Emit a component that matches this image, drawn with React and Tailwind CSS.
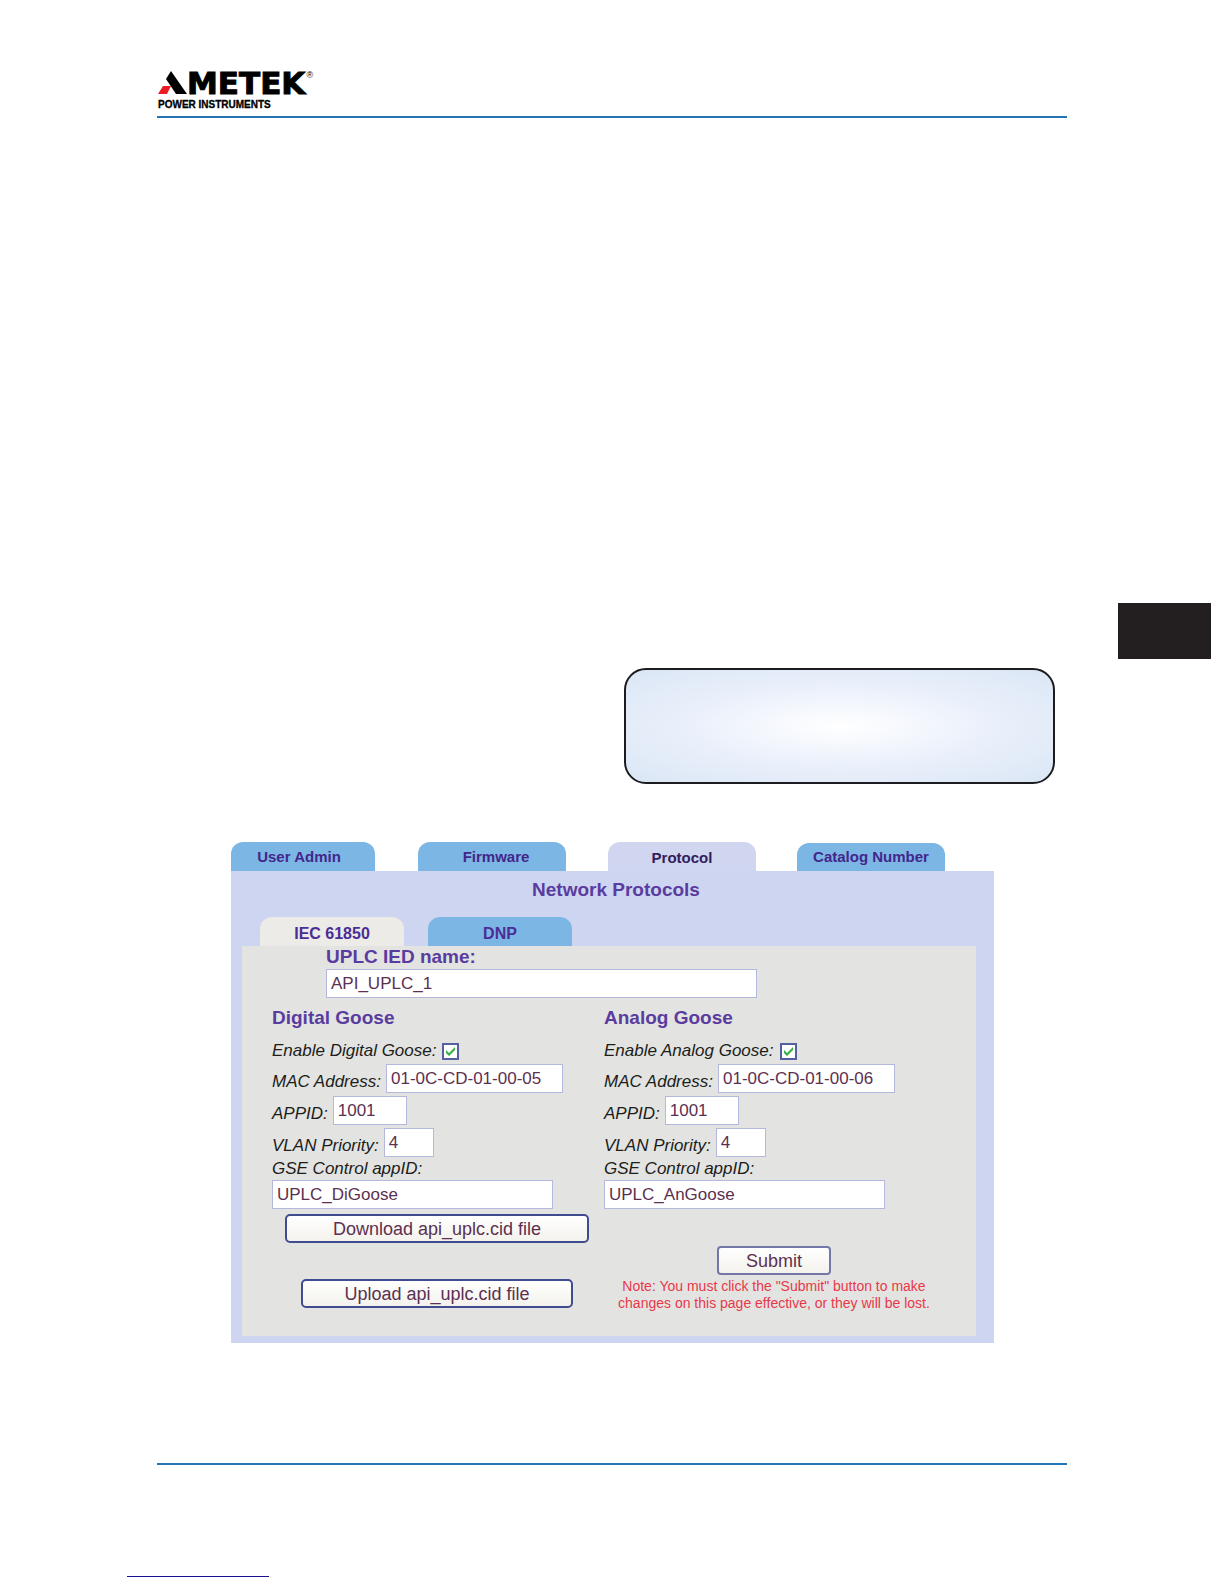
import { useState } from "react"

const topTabs = [
  { name: "User Admin", look: "mr-[43px] w-[144px] h-[29px] pr-[8px]" },
  { name: "Firmware", look: "mr-[42px] w-[148px] h-[29px] pl-[8px]" },
  { name: "Protocol", look: "mr-[41px] w-[148px] h-[29px] pt-[2px]" },
  { name: "Catalog Number", look: "w-[148px] h-[28px]" },
]

const headingClass = "text-[19px] leading-[22px] font-bold text-[#5a3ca0]"
const fieldClass = "h-[29px] border border-[#b4b8dc] bg-white px-[4px] text-[17px] text-[#5c3050] outline-none"
const buttonClass = "h-[29px] bg-linear-to-b from-white to-[#f3f2ec] text-[18px] leading-[22px] text-[#5c3050]"

function Logo() {
  return (
    <div className="w-fit pl-[1px]">
      <div className="flex h-[27px] items-start">
        <svg className="mt-[1px] h-[23px] w-[29px]" viewBox="0 0 29 23" aria-hidden="true">
          <path d="M13 0 L29 23 H18 L8 8 Z" fill="#000" />
          <path d="M5 15 H13 L9 23 H0 Z" fill="#ed1c24" />
        </svg>
        <span className="font-['DejaVu_Sans'] text-[31px] leading-[26px] font-bold text-black [-webkit-text-stroke:1px_black]">METEK</span>
        <span className="ml-[1px] text-[9px] leading-[10px]">®</span>
      </div>
      <div className="mt-[1px] mb-[1px] text-[10px] leading-[14px] font-bold text-black [-webkit-text-stroke:0.3px_black]">POWER INSTRUMENTS</div>
    </div>
  )
}

function TopTab({ name, look, active, onClick }) {
  return (
    <button
      role="tab"
      aria-selected={active}
      onClick={onClick}
      className={`shrink-0 rounded-t-[12px] text-[15px] leading-[20px] font-bold ${look} ${active ? "bg-[#d1d6f0] text-[#30205c]" : "bg-[#7cb6e4] text-[#43268c]"}`}
    >
      {name}
    </button>
  )
}

function SubTab({ name, active, onClick }) {
  return (
    <button
      role="tab"
      aria-selected={active}
      onClick={onClick}
      className={`h-[29px] w-[144px] rounded-t-[12px] pt-[4px] text-[16px] leading-[20px] font-bold text-[#4b2d96] ${active ? "bg-[#ecebe8]" : "bg-[#7cb6e4]"}`}
    >
      {name}
    </button>
  )
}

function Row({ id, label, value, width }) {
  return (
    <div className="mb-[3px] flex items-end gap-[5px]">
      <label htmlFor={id} className="leading-[22px]">{label}</label>
      <input id={id} type="text" defaultValue={value} className={`not-italic ${fieldClass} ${width}`} />
    </div>
  )
}

function GooseForm({ kind, mac, appId, gse }) {
  const id = kind.toLowerCase()
  return (
    <section className="text-[17px] text-[#201c1a] italic">
      <h3 className={`not-italic ${headingClass}`}>{kind} Goose</h3>
      <div className="mt-[11px] mb-[2px] flex h-[22px] items-center gap-[6px]">
        <label htmlFor={`${id}-enable`}>Enable {kind} Goose:</label>
        <span className="grid">
          <input
            id={`${id}-enable`}
            type="checkbox"
            defaultChecked
            className="peer col-start-1 row-start-1 size-[17px] appearance-none border-2 border-[#5560a0] bg-white"
          />
          <svg className="pointer-events-none invisible col-start-1 row-start-1 size-[17px] peer-checked:visible" viewBox="0 0 17 17">
            <path d="M4 7 L7 10 L13 4 V7 L7 13 L4 10 Z" fill="#35b044" />
          </svg>
        </span>
      </div>
      <Row id={`${id}-mac`} label="MAC Address:" value={mac} width="w-[177px]" />
      <Row id={`${id}-appid`} label="APPID:" value={appId} width="w-[74px]" />
      <Row id={`${id}-vlan`} label="VLAN Priority:" value="4" width="w-[50px]" />
      <label htmlFor={`${id}-gse`} className="block leading-[18px]">GSE Control appID:</label>
      <input id={`${id}-gse`} type="text" defaultValue={gse} className={`mt-[2px] block w-[281px] not-italic ${fieldClass}`} />
    </section>
  )
}

export default function App() {
  const [tab, setTab] = useState("Protocol")
  const [subTab, setSubTab] = useState("IEC 61850")

  return (
    <div className="flex flex-col bg-white font-['Liberation_Sans',Arial,sans-serif]">
      <header className="mx-[157px] border-b-2 border-[#2474b5] pt-[70px] pb-[3px]">
        <Logo />
      </header>

      {/* Chapter marker in the page margin */}
      <div className="mt-[485px] mr-[13px] h-[56px] w-[93px] self-end bg-[#231f20]" />

      <div className="mt-[9px] mr-[169px] h-[116px] w-[431px] self-end rounded-[22px] border-2 border-[#1c1c20] bg-[radial-gradient(ellipse_at_center,#ffffff_0%,#eaf0fb_50%,#dae6f5_100%)]" />

      <main className="mt-[58px] mr-[230px] ml-[231px]">
        <div role="tablist" className="flex items-end">
          {topTabs.map((t) => (
            <TopTab key={t.name} name={t.name} look={t.look} active={t.name === tab} onClick={() => setTab(t.name)} />
          ))}
        </div>

        <div className="bg-[#ced5f0] pr-[18px] pb-[7px] pl-[11px]">
          <h1 className={`pt-[8px] pl-[14px] text-center ${headingClass}`}>Network Protocols</h1>
          <div role="tablist" className="mt-[16px] flex gap-[24px] pl-[18px]">
            <SubTab name="IEC 61850" active={subTab === "IEC 61850"} onClick={() => setSubTab("IEC 61850")} />
            <SubTab name="DNP" active={subTab === "DNP"} onClick={() => setSubTab("DNP")} />
          </div>

          <form className="bg-[#e3e4e1] pb-[24px] pl-[30px]" onSubmit={(e) => e.preventDefault()}>
            <div className="pl-[54px]">
              <label htmlFor="ied-name" className={`block ${headingClass}`}>UPLC IED name:</label>
              <input id="ied-name" type="text" defaultValue="API_UPLC_1" className={`mt-[1px] block w-[431px] ${fieldClass}`} />
            </div>

            <div className="mt-[9px] grid grid-cols-[332px_1fr]">
              <GooseForm kind="Digital" mac="01-0C-CD-01-00-05" appId="1001" gse="UPLC_DiGoose" />
              <GooseForm kind="Analog" mac="01-0C-CD-01-00-06" appId="1001" gse="UPLC_AnGoose" />

              <div className="mt-[5px] flex w-[330px] flex-col items-center gap-[36px]">
                <button type="button" className={`w-[304px] rounded-[5px] border-2 border-[#404c90] ${buttonClass}`}>Download api_uplc.cid file</button>
                <button type="button" className={`w-[272px] rounded-[5px] border-2 border-[#404c90] ${buttonClass}`}>Upload api_uplc.cid file</button>
              </div>
              <div className="mt-[37px] flex w-[340px] flex-col items-center">
                <button type="submit" className={`w-[114px] rounded-[4px] border-2 border-[#7478a8] ${buttonClass}`}>Submit</button>
                <p className="mt-[3px] text-center text-[14px] leading-[17px] text-[#e8384a]">
                  Note: You must click the "Submit" button to make
                  <br />
                  changes on this page effective, or they will be lost.
                </p>
              </div>
            </div>
          </form>
        </div>
      </main>

      <footer className="mt-[120px]">
        <div className="mx-[157px] border-b-2 border-[#2474b5]" />
        <a href="#top" aria-label="Back to top" className="mt-[111px] mb-[8px] ml-[127px] block h-[1px] w-[142px] bg-[#1a1090]" />
      </footer>
    </div>
  )
}
